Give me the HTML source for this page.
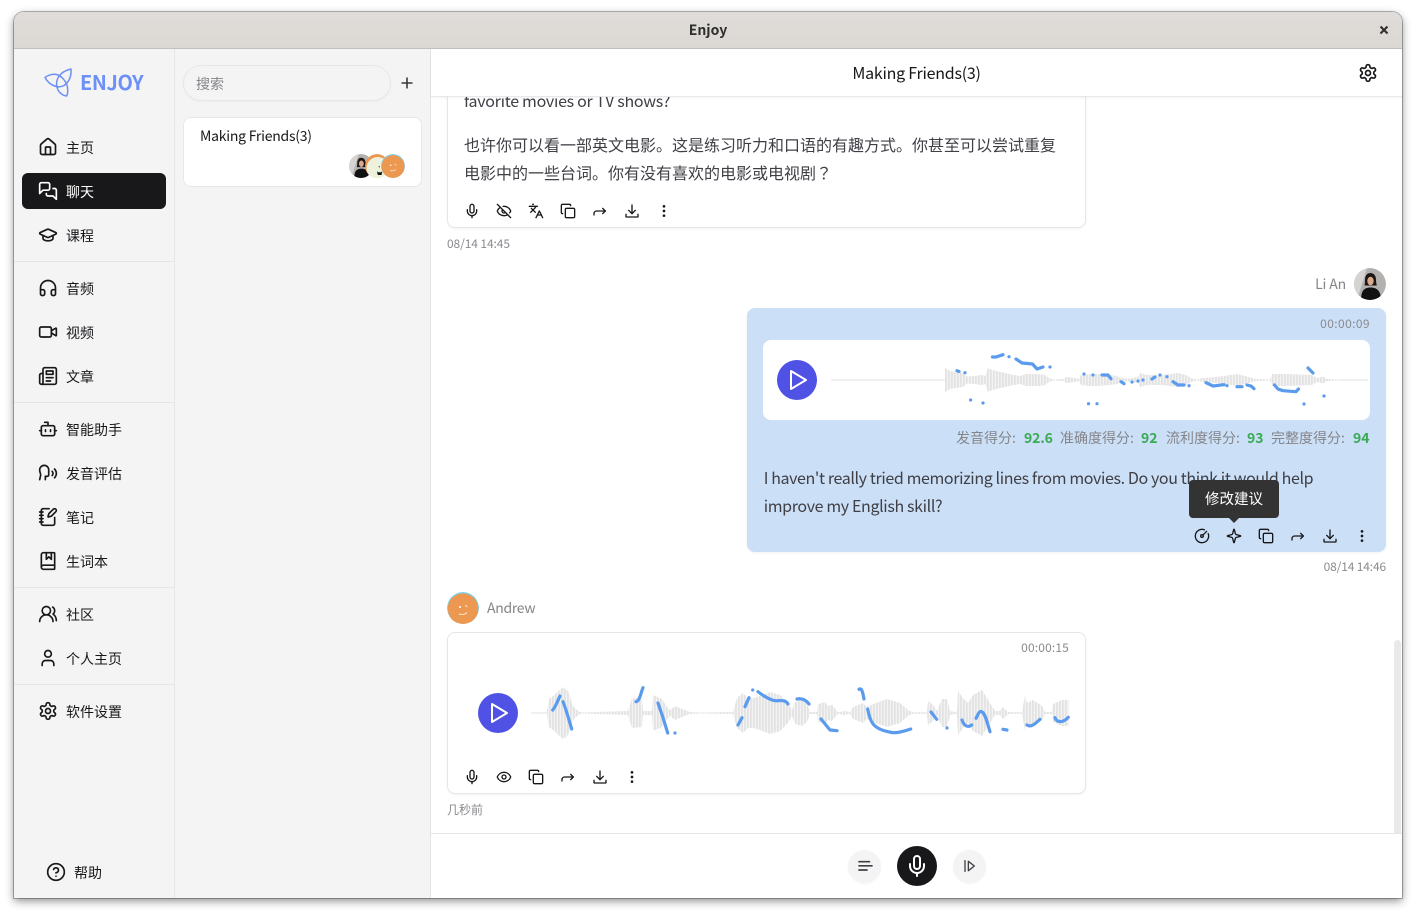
<!DOCTYPE html>
<html><head><meta charset="utf-8"><title>Enjoy</title>
<style>
*{box-sizing:border-box}
html,body{margin:0;padding:0;width:1416px;height:915px;overflow:hidden;background:#fff;font-family:"Noto Sans CJK SC","Liberation Sans",sans-serif;color:#18181b}
.a{position:absolute}
.t{position:absolute;white-space:nowrap;line-height:20px}
.win{position:absolute;left:14px;top:12px;width:1388px;height:886px;border-radius:10px 10px 0 0;box-shadow:0 0 0 1px rgba(0,0,0,.28),0 3px 9px rgba(0,0,0,.45)}
.ic{position:absolute;fill:none;stroke:currentColor;stroke-width:2;stroke-linecap:round;stroke-linejoin:round}
.nav{width:20px;height:20px;left:38px;color:#18181b}
.act{width:16px;height:16px;color:#18181b}
.n{left:66px;font-size:14px;color:#18181b}
.hr{position:absolute;left:14px;width:160px;height:1px;background:#e5e5e5}
.g{color:#8a8a8f;font-size:12px}
.p{font-size:16px;color:#3f3f46}
.s{top:428px;font-size:14px;color:#85858a}
.v{top:428px;font-size:14px;font-weight:700;color:#3aaa55}
.av{border-radius:50%}
</style></head><body>
<svg width="0" height="0" style="position:absolute">
<symbol id="home" viewBox="0 0 24 24"><path d="M15 21v-8a1 1 0 0 0-1-1h-4a1 1 0 0 0-1 1v8"/><path d="M3 10a2 2 0 0 1 .709-1.528l7-5.999a2 2 0 0 1 2.582 0l7 5.999A2 2 0 0 1 21 10v9a2 2 0 0 1-2 2H5a2 2 0 0 1-2-2z"/></symbol>
<symbol id="chat" viewBox="0 0 24 24"><path d="M14 9a2 2 0 0 1-2 2H6l-4 4V4a2 2 0 0 1 2-2h8a2 2 0 0 1 2 2z"/><path d="M18 9h2a2 2 0 0 1 2 2v11l-4-4h-6a2 2 0 0 1-2-2v-1"/></symbol>
<symbol id="cap" viewBox="0 0 24 24"><path d="M21.42 10.922a1 1 0 0 0-.019-1.838L12.83 5.18a2 2 0 0 0-1.66 0L2.6 9.08a1 1 0 0 0 0 1.832l8.57 3.908a2 2 0 0 0 1.66 0z"/><path d="M6 12.5V16a6 3 0 0 0 12 0v-3.5"/></symbol>
<symbol id="head" viewBox="0 0 24 24"><path d="M3 14h3a2 2 0 0 1 2 2v3a2 2 0 0 1-2 2H5a2 2 0 0 1-2-2v-7a9 9 0 0 1 18 0v7a2 2 0 0 1-2 2h-1a2 2 0 0 1-2-2v-3a2 2 0 0 1 2-2h3"/></symbol>
<symbol id="video" viewBox="0 0 24 24"><path d="m16 13 5.223 3.482a.5.5 0 0 0 .777-.416V7.87a.5.5 0 0 0-.752-.432L16 10.5"/><rect x="2" y="6" width="14" height="12" rx="2"/></symbol>
<symbol id="news" viewBox="0 0 24 24"><path d="M4 22h16a2 2 0 0 0 2-2V4a2 2 0 0 0-2-2H8a2 2 0 0 0-2 2v16a2 2 0 0 1-2 2Zm0 0a2 2 0 0 1-2-2v-9c0-1.1.9-2 2-2h2"/><path d="M18 14h-8"/><path d="M15 18h-5"/><path d="M10 6h8v4h-8V6Z"/></symbol>
<symbol id="bot" viewBox="0 0 24 24"><path d="M12 8V4H8"/><rect width="16" height="12" x="4" y="8" rx="2"/><path d="M2 14h2"/><path d="M20 14h2"/><path d="M15 13v2"/><path d="M9 13v2"/></symbol>
<symbol id="speech" viewBox="0 0 24 24"><path d="M8.8 20v-4.1l1.9.2a2.3 2.3 0 0 0 2.164-2.1V8.3A5.37 5.37 0 0 0 2 8.25c0 2.8.656 3.054 1 4.55a5.77 5.77 0 0 1 .029 2.758L2 20"/><path d="M19.8 17.8a7.5 7.5 0 0 0 .003-10.603"/><path d="M17 15a3.5 3.5 0 0 0-.025-4.975"/></symbol>
<symbol id="note" viewBox="0 0 24 24"><path d="M13.4 2H6a2 2 0 0 0-2 2v16a2 2 0 0 0 2 2h12a2 2 0 0 0 2-2v-7.4"/><path d="M2 6h4"/><path d="M2 10h4"/><path d="M2 14h4"/><path d="M2 18h4"/><path d="M21.378 5.626a1 1 0 1 0-3.004-3.004l-5.01 5.012a2 2 0 0 0-.506.854l-.837 2.87a.5.5 0 0 0 .62.62l2.87-.837a2 2 0 0 0 .854-.506z"/></symbol>
<symbol id="book" viewBox="0 0 24 24"><path d="M10 2v8l3-3 3 3V2"/><path d="M4 19.5v-15A2.5 2.5 0 0 1 6.5 2H19a1 1 0 0 1 1 1v18a1 1 0 0 1-1 1H6.5a1 1 0 0 1 0-5H20"/></symbol>
<symbol id="users" viewBox="0 0 24 24"><path d="M18 21a8 8 0 0 0-16 0"/><circle cx="10" cy="8" r="5"/><path d="M22 20c0-3.37-2-6.5-4-8a5 5 0 0 0-.45-8.3"/></symbol>
<symbol id="user" viewBox="0 0 24 24"><path d="M19 21v-2a4 4 0 0 0-4-4H9a4 4 0 0 0-4 4v2"/><circle cx="12" cy="7" r="4"/></symbol>
<symbol id="gear" viewBox="0 0 24 24"><path d="M12.22 2h-.44a2 2 0 0 0-2 2v.18a2 2 0 0 1-1 1.73l-.43.25a2 2 0 0 1-2 0l-.15-.08a2 2 0 0 0-2.73.73l-.22.38a2 2 0 0 0 .73 2.73l.15.1a2 2 0 0 1 1 1.72v.51a2 2 0 0 1-1 1.74l-.15.09a2 2 0 0 0-.73 2.73l.22.38a2 2 0 0 0 2.73.73l.15-.08a2 2 0 0 1 2 0l.43.25a2 2 0 0 1 1 1.73V20a2 2 0 0 0 2 2h.44a2 2 0 0 0 2-2v-.18a2 2 0 0 1 1-1.73l.43-.25a2 2 0 0 1 2 0l.15.08a2 2 0 0 0 2.73-.73l.22-.39a2 2 0 0 0-.73-2.73l-.15-.08a2 2 0 0 1-1-1.74v-.5a2 2 0 0 1 1-1.74l.15-.09a2 2 0 0 0 .73-2.73l-.22-.38a2 2 0 0 0-2.73-.73l-.15.08a2 2 0 0 1-2 0l-.43-.25a2 2 0 0 1-1-1.73V4a2 2 0 0 0-2-2z"/><circle cx="12" cy="12" r="3"/></symbol>
<symbol id="help" viewBox="0 0 24 24"><circle cx="12" cy="12" r="10"/><path d="M9.09 9a3 3 0 0 1 5.83 1c0 2-3 3-3 3"/><path d="M12 17h.01"/></symbol>
<symbol id="mic" viewBox="0 0 24 24"><path d="M12 2a3 3 0 0 0-3 3v7a3 3 0 0 0 6 0V5a3 3 0 0 0-3-3Z"/><path d="M19 10v2a7 7 0 0 1-14 0v-2"/><line x1="12" x2="12" y1="19" y2="22"/></symbol>
<symbol id="eyeoff" viewBox="0 0 24 24"><path d="M10.733 5.076a10.744 10.744 0 0 1 11.205 6.575 1 1 0 0 1 0 .696 10.747 10.747 0 0 1-1.444 2.49"/><path d="M14.084 14.158a3 3 0 0 1-4.242-4.242"/><path d="M17.479 17.499a10.75 10.75 0 0 1-15.417-5.151 1 1 0 0 1 0-.696 10.75 10.75 0 0 1 4.446-5.143"/><path d="m2 2 20 20"/></symbol>
<symbol id="eye" viewBox="0 0 24 24"><path d="M2.062 12.348a1 1 0 0 1 0-.696 10.75 10.75 0 0 1 19.876 0 1 1 0 0 1 0 .696 10.75 10.75 0 0 1-19.876 0"/><circle cx="12" cy="12" r="3"/></symbol>
<symbol id="lang" viewBox="0 0 24 24"><path d="m5 8 6 6"/><path d="m4 14 6-6 2-3"/><path d="M2 5h12"/><path d="M7 2h1"/><path d="m22 22-5-10-5 10"/><path d="M14 18h6"/></symbol>
<symbol id="copy" viewBox="0 0 24 24"><rect width="14" height="14" x="8" y="8" rx="2"/><path d="M4 16c-1.1 0-2-.9-2-2V4c0-1.1.9-2 2-2h10c1.1 0 2 .9 2 2"/></symbol>
<symbol id="fwd" viewBox="0 0 24 24"><polyline points="16 16 20 12 16 8"/><path d="M3 18v-2a4 4 0 0 1 4-4h13"/></symbol>
<symbol id="dl" viewBox="0 0 24 24"><path d="M12 3v13"/><path d="m7 11 5 5 5-5"/><path d="M3 17v3a1 1 0 0 0 1 1h16a1 1 0 0 0 1-1v-3"/></symbol>
<symbol id="more" viewBox="0 0 24 24"><circle cx="12" cy="5" r="1"/><circle cx="12" cy="12" r="1"/><circle cx="12" cy="19" r="1"/></symbol>
<symbol id="gauge" viewBox="0 0 24 24"><path d="M15.6 2.7a10 10 0 1 0 5.7 5.7"/><circle cx="12" cy="12" r="2"/><path d="M13.4 10.6 19 5"/></symbol>
<symbol id="spark" viewBox="0 0 24 24"><path d="M9.937 15.5A2 2 0 0 0 8.5 14.063l-6.135-1.582a.5.5 0 0 1 0-.962L8.5 9.936A2 2 0 0 0 9.937 8.5l1.582-6.135a.5.5 0 0 1 .963 0L14.063 8.5A2 2 0 0 0 15.5 9.937l6.135 1.581a.5.5 0 0 1 0 .964L15.5 14.063a2 2 0 0 0-1.437 1.437l-1.582 6.135a.5.5 0 0 1-.963 0z"/></symbol>
<symbol id="step" viewBox="0 0 24 24"><line x1="6" x2="6" y1="4" y2="20"/><polygon points="11,5 20,12 11,19"/></symbol>
<symbol id="lian" viewBox="0 0 32 32"><circle cx="16" cy="16" r="16" fill="#b3b1af" stroke="none"/><path d="M0 0h13L3 32H0z" fill="#d6d4d2" stroke="none"/><path d="M11 12c0-5 2.500-7 5.500-7s5.500 2.500 5.500 6.500c0 2 .3 4 .8 6H10.500c.4-2 .5-3.500.5-5.500z" fill="#1c1715" stroke="none"/><ellipse cx="16.500" cy="13" rx="3.200" ry="4.300" fill="#d9ab8c" stroke="none"/><path d="M7 33c0-9 2-13.500 9.500-13.500S27 24 27 33z" fill="#111" stroke="none"/></symbol>
<symbol id="andrew" viewBox="0 0 32 32"><circle cx="16" cy="16" r="16" fill="#7fd0e8" stroke="none"/><circle cx="16" cy="16.800" r="15.300" fill="#ec9850" stroke="none"/><circle cx="13" cy="15" r="1" fill="#fff" stroke="none"/><path d="M18 13.500c1.500 0 2 1 2 1.800M12 22c3 1 6 .5 8-1.500" fill="none" stroke="#fbe3c8" stroke-width="1"/></symbol>
<symbol id="cream" viewBox="0 0 32 32"><circle cx="16" cy="16" r="16" fill="#ec9850" stroke="none"/><circle cx="17" cy="19" r="15" fill="#eef2dc" stroke="none"/><path d="M16 23c2 2 5 2 7 0l-1 5h-5z" fill="#111" stroke="none"/><circle cx="19" cy="17" r=".8" fill="#222" stroke="none"/></symbol>
<pattern id="bars" width="3" height="8" patternUnits="userSpaceOnUse"><rect width="3" height="8" fill="#f3f3f3"/><rect width="1.800" height="8" fill="#e3e3e3"/></pattern>
</svg>

<div class="win"></div>
<div class="a" style="left:14px;top:12px;width:1388px;height:886px;border-radius:10px 10px 0 0;overflow:hidden;background:#fff">
  <div class="a" style="left:0;top:0;width:1388px;height:37px;background:linear-gradient(#e0dcd9,#dbd7d3);border-bottom:1px solid #c4bfba"></div>
  <div class="a" style="left:0;top:37px;width:161px;height:849px;background:#f4f4f4;border-right:1px solid #e6e6e6"></div>
  <div class="a" style="left:161px;top:37px;width:256px;height:849px;background:#f4f4f4;border-right:1px solid #e4e4e4"></div>
</div>

<div class="t" style="left:608px;width:200px;text-align:center;top:20px;font-size:14px;font-weight:700;color:#2e2e2e">Enjoy</div>
<svg class="a" style="left:1379px;top:25px" width="10" height="10" viewBox="0 0 10 10"><path d="M1.500 1.500l7 7M8.500 1.500l-7 7" stroke="#2e2e2e" stroke-width="2" stroke-linecap="butt"/></svg>

<!-- logo -->
<svg class="a" style="left:40px;top:64px;fill:none;stroke:#6c90f5;stroke-width:1.500;stroke-linejoin:round" width="36" height="36" viewBox="40 64 36 36">
<path d="M45 77.500C49 74.500 54 73.500 58 75C62 76.500 65.500 81 67 85C68 89 68 93 66.700 96C62 95.500 58 92 57 87C55.500 81 58 72 71 69C71.500 76 69 82 64 85.500C58 89 49 85 45 77.500Z"/>
</svg>
<div class="t" style="left:80px;top:68px;font-size:20px;line-height:28px;font-weight:700;color:#6c90f5;letter-spacing:-.4px">ENJOY</div>

<!-- nav -->
<div class="a" style="left:22px;top:173px;width:144px;height:36px;background:#18181b;border-radius:6px"></div>
<svg class="ic nav" style="top:137px"><use href="#home"/></svg><div class="t n" style="top:138px">主页</div>
<svg class="ic nav" style="top:181px;color:#fff"><use href="#chat"/></svg><div class="t n" style="top:182px;color:#fff">聊天</div>
<svg class="ic nav" style="top:225px"><use href="#cap"/></svg><div class="t n" style="top:226px">课程</div>
<div class="hr" style="top:261px"></div>
<svg class="ic nav" style="top:278px"><use href="#head"/></svg><div class="t n" style="top:279px">音频</div>
<svg class="ic nav" style="top:322px"><use href="#video"/></svg><div class="t n" style="top:323px">视频</div>
<svg class="ic nav" style="top:366px"><use href="#news"/></svg><div class="t n" style="top:367px">文章</div>
<div class="hr" style="top:402px"></div>
<svg class="ic nav" style="top:419px"><use href="#bot"/></svg><div class="t n" style="top:420px">智能助手</div>
<svg class="ic nav" style="top:463px"><use href="#speech"/></svg><div class="t n" style="top:464px">发音评估</div>
<svg class="ic nav" style="top:507px"><use href="#note"/></svg><div class="t n" style="top:508px">笔记</div>
<svg class="ic nav" style="top:551px"><use href="#book"/></svg><div class="t n" style="top:552px">生词本</div>
<div class="hr" style="top:587px"></div>
<svg class="ic nav" style="top:604px"><use href="#users"/></svg><div class="t n" style="top:605px">社区</div>
<svg class="ic nav" style="top:648px"><use href="#user"/></svg><div class="t n" style="top:649px">个人主页</div>
<div class="hr" style="top:684px"></div>
<svg class="ic nav" style="top:701px"><use href="#gear"/></svg><div class="t n" style="top:702px">软件设置</div>
<svg class="ic nav" style="top:862px;left:46px"><use href="#help"/></svg><div class="t n" style="top:863px;left:74px">帮助</div>

<!-- list panel -->
<div class="a" style="left:183px;top:65px;width:208px;height:36px;border:1px solid #e7e7e7;border-radius:18px;background:#f4f4f4;box-shadow:0 1px 2px rgba(0,0,0,.03)"></div>
<div class="t" style="left:196px;top:74px;font-size:14px;color:#85858a">搜索</div>
<svg class="a" style="left:401px;top:77px" width="12" height="12" viewBox="0 0 12 12"><path d="M6 .5v11M.5 6h11" stroke="#3a3a3a" stroke-width="1.600"/></svg>
<div class="a" style="left:183px;top:117px;width:239px;height:70px;background:#fff;border:1px solid #e8e8e8;border-radius:8px"></div>
<div class="t" style="left:200px;top:126px;font-size:14px;color:#18181b;letter-spacing:-.24px">Making Friends(3)</div>
<svg class="a av" style="left:349px;top:154px" width="24" height="24" viewBox="0 0 32 32"><use href="#lian"/></svg>
<svg class="a av" style="left:365px;top:154px" width="24" height="24" viewBox="0 0 32 32"><use href="#cream"/></svg>
<svg class="a av" style="left:381px;top:154px" width="24" height="24" viewBox="0 0 32 32"><use href="#andrew"/></svg>

<!-- main messages -->
<div class="t p" style="left:464px;top:90px;letter-spacing:-.29px">favorite movies or TV shows?</div>
<div class="a" style="left:447px;top:60px;width:639px;height:168px;border:1px solid #e6e6e6;border-radius:8px;box-shadow:0 1px 2px rgba(0,0,0,.05)"></div>
<div class="t p" style="left:464px;top:134px">也许你可以看一部英文电影。这是练习听力和口语的有趣方式。你甚至可以尝试重复</div>
<div class="t p" style="left:464px;top:162px">电影中的一些台词。你有没有喜欢的电影或电视剧<span style="font-family:'Noto Sans CJK TC',sans-serif">？</span></div>
<svg class="ic act" style="left:464px;top:203px"><use href="#mic"/></svg>
<svg class="ic act" style="left:496px;top:203px"><use href="#eyeoff"/></svg>
<svg class="ic act" style="left:528px;top:203px"><use href="#lang"/></svg>
<svg class="ic act" style="left:560px;top:203px"><use href="#copy"/></svg>
<svg class="ic act" style="left:592px;top:203px"><use href="#fwd"/></svg>
<svg class="ic act" style="left:624px;top:203px"><use href="#dl"/></svg>
<svg class="ic act" style="left:656px;top:203px"><use href="#more"/></svg>
<div class="t g" style="left:447px;top:234px;letter-spacing:-.1px">08/14 14:45</div>

<!-- header over text -->
<div class="a" style="left:431px;top:49px;width:971px;height:48px;background:#fff;border-bottom:1px solid #e8e8e8;box-shadow:0 1px 2px rgba(0,0,0,.05)"></div>
<div class="t" style="left:431px;width:971px;text-align:center;top:62px;font-size:16px;color:#18181b;letter-spacing:-.24px">Making Friends(3)</div>
<svg class="ic" style="left:1358px;top:63px;width:20px;height:20px;color:#18181b"><use href="#gear"/></svg>

<!-- Li An -->
<div class="t" style="right:70px;top:274px;font-size:14px;color:#85858a;letter-spacing:-.15px">Li An</div>
<svg class="a av" style="left:1354px;top:268px" width="32" height="32"><use href="#lian"/></svg>
<div class="a" style="left:747px;top:308px;width:639px;height:244px;background:#cbdff7;border-radius:8px;box-shadow:0 1px 2px rgba(0,0,0,.06)"></div>
<div class="t g" style="right:46px;top:314px;letter-spacing:.4px">00:00:09</div>
<div class="a" style="left:763px;top:340px;width:607px;height:80px;background:#fff;border-radius:8px"></div>
<svg class="a" style="left:0;top:0" width="1416" height="915">
<g transform="translate(0,380)">
<path id="w1" fill="url(#bars)" d="M945 0L945-12L950-9L963-7L967-3.500L974-4L982-5L985-4L988-12L992-10L1005-7L1014-5L1020-4L1026-6L1039-6L1045-5L1049-2L1054-.5L1064-1L1066-3L1072-2.500L1079-1L1081-5L1089-6L1098-6L1110-5L1117-4L1121-2L1129-1.500L1138-3L1140-7L1148-5L1161-5L1178-7L1186-5L1191-2L1197-.5L1203-2L1216-3L1224-4L1237-6L1245-4L1256-1L1270-.5L1272-6L1287-6L1312-5L1317-2L1323-3.500L1327-1L1338-.5L1338 0Z"/>
<use href="#w1" transform="scale(1,-1)"/>
<path d="M831 0H945M1338 0H1368" stroke="#e2e2e2" stroke-width="1"/>
</g>
<circle cx="797" cy="380" r="20" fill="#4f52e5"/>
<path d="M791 371L806 380L791 389Z" fill="none" stroke="#fff" stroke-width="2" stroke-linejoin="round"/>
<g fill="none" stroke="#5b9bee" stroke-width="3.200" stroke-linecap="round" stroke-linejoin="round">
<path d="M992.500 357L996 357L1003 354.700M1009 356.700h.01M1016 359L1022 363L1032.500 364L1037 369L1043 367M1050 367h.01"/>
<path d="M957 370.700L959 371.500M965 372.700h.01M970.600 400h.01M983 403h.01M1084 374h.01M1093 375h.01M1102 375L1108 375L1111 378.700M1121 381.700L1124 383.700M1132 382h.01M1138 381h.01M1143 380h.01M1152 379L1155 377M1160 375h.01M1167 376.700h.01M1173 381.700L1178 385L1184 385M1189 385.700h.01M1206 382.700L1213 386L1224 384.700M1227 385.700h.01M1237 386.700L1242 386.700M1247 385L1251 386L1254 388.700M1274.500 385L1278 389L1283 390.700L1296 391.700L1298.500 389M1308 368L1313 373M1324 396h.01M1304 404h.01M1088.500 403.700h.01M1097 403.700h.01"/>
</g>
</svg>
<div class="t s" style="left:956px">发音得分:</div><div class="t v" style="left:1024px;letter-spacing:-.15px">92.6</div>
<div class="t s" style="left:1060px">准确度得分:</div><div class="t v" style="left:1141px">92</div>
<div class="t s" style="left:1166px">流利度得分:</div><div class="t v" style="left:1247px">93</div>
<div class="t s" style="left:1271px">完整度得分:</div><div class="t v" style="left:1353px">94</div>
<div class="t p" style="left:763.700px;top:467px;letter-spacing:-.38px">I haven't really tried memorizing lines from movies. Do you think it would help</div>
<div class="t p" style="left:763.700px;top:495px;letter-spacing:-.36px">improve my English skill?</div>
<div class="a" style="left:1189px;top:480px;width:90px;height:38px;background:#333;border-radius:4px"></div>
<div class="a" style="left:1229px;top:518px;width:0;height:0;border-left:5px solid transparent;border-right:5px solid transparent;border-top:5px solid #333"></div>
<div class="t" style="left:1189px;width:90px;text-align:center;top:489px;font-size:14.500px;color:#fff">修改建议</div>
<svg class="ic act" style="left:1194px;top:528px"><use href="#gauge"/></svg>
<svg class="ic act" style="left:1226px;top:528px"><use href="#spark"/></svg>
<svg class="ic act" style="left:1258px;top:528px"><use href="#copy"/></svg>
<svg class="ic act" style="left:1290px;top:528px"><use href="#fwd"/></svg>
<svg class="ic act" style="left:1322px;top:528px"><use href="#dl"/></svg>
<svg class="ic act" style="left:1354px;top:528px"><use href="#more"/></svg>
<div class="t g" style="right:30px;top:557px;letter-spacing:-.15px">08/14 14:46</div>

<!-- Andrew -->
<svg class="a av" style="left:447px;top:592px" width="32" height="32"><use href="#andrew"/></svg>
<div class="t" style="left:487px;top:598px;font-size:14px;color:#85858a;letter-spacing:-.3px">Andrew</div>
<div class="a" style="left:447px;top:632px;width:639px;height:162px;border:1px solid #e6e6e6;border-radius:8px;box-shadow:0 1px 2px rgba(0,0,0,.05)"></div>
<div class="t g" style="right:347px;top:638px;letter-spacing:.15px">00:00:15</div>
<svg class="a" style="left:0;top:0" width="1416" height="915">
<g transform="translate(0,713)">
<path id="w2" fill="url(#bars)" d="M547 0L547-2L549-14L553-17L563-26L568-22L573-7L578-2L582-.5L628-2L632-15L642-14L643-2L652-2L653-18L662-14L667-6L670-3L675-7L682-4L690-1L700-.5L733-1L737-15L743-20L748-15L753-15L760-17L770-21L780-18L788-10L792-3L795-11L802-13L807-9L810-1L817-1L818-9L825-11L828-7L832-8L836-3L838-.7L845-2L850-.7L853-6L863-10L867-6L873-9L887-14L900-10L908-3L913-.7L927-.7L928-12L933-8L937-2L942-14L947-14L950-2L957-.7L958-22L963-15L968-10L973-18L982-23L990-10L995-2L1000-2L1003-6L1008-1L1022-.7L1025-18L1027-10L1033-13L1042-7L1045-1L1052-1L1053-9L1062-13L1068.500-13L1068.500 0Z"/>
<use href="#w2" transform="scale(1,-1)"/>
<path d="M531 0H547" stroke="#e2e2e2" stroke-width="1"/>
</g>
<circle cx="498" cy="713" r="20" fill="#4f52e5"/>
<path d="M492 704L507 713L492 722Z" fill="none" stroke="#fff" stroke-width="2" stroke-linejoin="round"/>
<g fill="none" stroke="#5b9bee" stroke-width="3.200" stroke-linecap="round" stroke-linejoin="round">
<path d="M552.700 710C555 708 558 700 560 696M563 701.700C566 709 569 720 571.700 729M636 701.700C640 701 641 692 643 687.700M658 703L662.700 716.700L667.700 733M675 733h.01M738 725L742 717.700M745 706.700L749 697.700M752.700 690h.01M758 691.700C762 695 770 700 775 700.700C780 701 785 699 788 704M797 699C802 698 806 700 809 704M821 719L830 730L837 730.700M859 689.300C862 687 863 694 864 699M867.700 709C869 716 871 722 874 725C879 730 886 731.500 893 732.700C899 733 905 731 910.700 729M931 712L936.700 719.300M947 728h.01M962 720C964 726 968 728 971.700 725M976 718.300C978 715 979 711 981 711.500C985 712 987 722 990 731.700M1003 729.300L1007 730M1027 725C1031 728 1036 723 1040 719.300M1055 717.700C1057 723 1063 723 1068.300 717.300"/>
</g>
</svg>
<svg class="ic act" style="left:464px;top:769px"><use href="#mic"/></svg>
<svg class="ic act" style="left:496px;top:769px"><use href="#eye"/></svg>
<svg class="ic act" style="left:528px;top:769px"><use href="#copy"/></svg>
<svg class="ic act" style="left:560px;top:769px"><use href="#fwd"/></svg>
<svg class="ic act" style="left:592px;top:769px"><use href="#dl"/></svg>
<svg class="ic act" style="left:624px;top:769px"><use href="#more"/></svg>
<div class="t g" style="left:447px;top:800px">几秒前</div>

<!-- scrollbar -->
<div class="a" style="left:1394px;top:640px;width:7px;height:193px;background:#e9e9e9;border-radius:4px 4px 0 0"></div>

<!-- footer -->
<div class="a" style="left:431px;top:833px;width:971px;height:1px;background:#e6e6e6"></div>
<div class="a" style="left:848px;top:850px;width:33px;height:33px;border-radius:50%;background:#f4f4f5;box-shadow:0 1px 2px rgba(0,0,0,.04)"></div>
<svg class="a" style="left:0;top:0" width="1416" height="915"><path d="M859 861.700h10.500M859 865.800h13M859 870h8" stroke="#3f3f46" stroke-width="1.700" stroke-linecap="round" fill="none"/></svg>
<div class="a" style="left:897px;top:846px;width:40px;height:40px;border-radius:50%;background:#18181b"></div>
<svg class="ic" style="left:905px;top:854px;width:24px;height:24px;color:#fff"><use href="#mic"/></svg>
<div class="a" style="left:953px;top:850px;width:33px;height:33px;border-radius:50%;background:#f4f4f5;box-shadow:0 1px 2px rgba(0,0,0,.04)"></div>
<svg class="ic" style="left:961px;top:858px;width:16px;height:16px;color:#3f3f46"><use href="#step"/></svg>
</body></html>
